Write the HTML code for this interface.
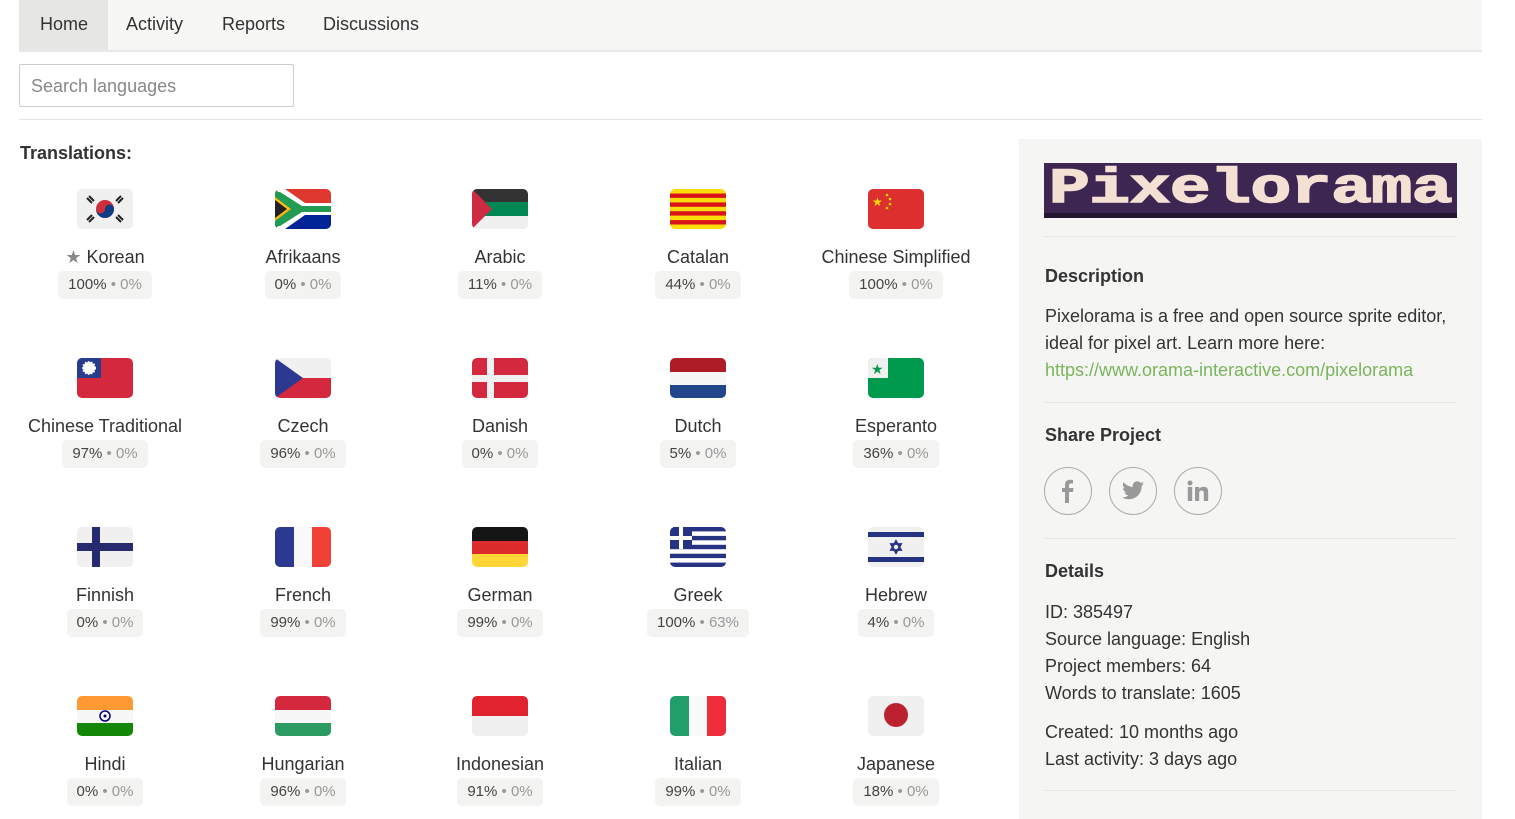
<!DOCTYPE html>
<html><head><meta charset="utf-8"><style>
*{box-sizing:border-box;margin:0;padding:0}
body{width:1515px;height:811px;overflow:hidden;background:#fff;font-family:"Liberation Sans",sans-serif;color:#333;position:relative}
.nav{position:absolute;left:19px;top:0;width:1463px;height:52px;background:#f7f7f6;border-bottom:2px solid #e8e8e6}
.nav span{position:absolute;top:14px;font-size:18px;color:#333}
.home{position:absolute;left:0;top:0;width:89px;height:50px;background:#e6e6e4}
.search{position:absolute;left:19px;top:64px;width:275px;height:43px;border:1px solid #ccc;border-radius:2px;font-size:18px;color:#888;padding:11px 11px}
.hr{position:absolute;left:19px;top:119px;width:1463px;height:1px;background:#e4e4e2}
.tt{position:absolute;left:20px;top:143px;font-size:18px;font-weight:bold;color:#333}
.cell{position:absolute;width:198px;text-align:center}
.flag{width:56px;height:40px;margin:0 auto;border-radius:5px;overflow:hidden}
.flag svg{display:block}
.nm{margin-top:17px;font-size:18px;line-height:22px;color:#333;white-space:nowrap}
.bd{display:inline-block;margin-top:3px;background:#f3f3f1;border-radius:5px;padding:0 10px;height:28px;line-height:28px;font-size:15px;color:#444}
.bd i{font-style:normal;color:#999}
.side{position:absolute;left:1019px;top:139px;width:463px;height:680px;background:#f5f5f3}
.side .ln{position:absolute;left:25px;width:413px;height:1px;background:#e6e6e1}
.side h3{position:absolute;left:26px;font-size:18px;font-weight:bold;color:#333}
.side p{position:absolute;left:26px;font-size:18px;line-height:27px;color:#333}
.circ{position:absolute;top:328px;width:48px;height:48px;border:1.5px solid #aaa;border-radius:50%}
.circ svg{position:absolute;left:11px;top:11px}
</style></head><body>
<div class="nav"><div class="home"></div>
<span style="left:21px">Home</span><span style="left:107px">Activity</span><span style="left:203px">Reports</span><span style="left:304px">Discussions</span></div>
<div class="search">Search languages</div>
<div class="hr"></div>
<div class="tt">Translations:</div>

<!-- row 1 -->
<div class="cell" style="left:6px;top:189px"><div class="flag"><svg width="56" height="40"><rect width="56" height="40" fill="#f0f0f0"/><circle cx="28" cy="20" r="9" fill="#cd2e3a"/><path d="M19 20a9 9 0 0 0 18 0a4.5 4.5 0 0 0-9 0a4.5 4.5 0 0 1-9 0z" fill="#0f3b84"/><g stroke="#222" stroke-width="2"><path d="M10 9l5 5M12 7l5 5M39 12l5-5M41 14l5-5M10 31l5-5M12 33l5-5M39 28l5 5M41 26l5 5"/></g></svg></div><div class="nm"><span style="color:#888">★</span> Korean</div><div class="bd">100% <i>• 0%</i></div></div>
<div class="cell" style="left:204px;top:189px"><div class="flag"><svg width="56" height="40"><rect width="56" height="20" fill="#de3831"/><rect y="20" width="56" height="20" fill="#002395"/><path d="M0 0L22 20L0 40z" fill="#229b54"/><path d="M0 0h10l20 14h26v12H30L10 40H0L22 20z" fill="#fff"/><path d="M0 3h5l22 14h29v6H27L5 37H0z" fill="#229b54"/><path d="M0 8L16 20L0 32z" fill="#ffb612"/><path d="M0 11L12 20L0 29z" fill="#222"/></svg></div><div class="nm">Afrikaans</div><div class="bd">0% <i>• 0%</i></div></div>
<div class="cell" style="left:401px;top:189px"><div class="flag"><svg width="56" height="40"><rect width="56" height="13" fill="#333"/><rect y="13" width="56" height="14" fill="#008753"/><rect y="27" width="56" height="13" fill="#f0f0f0"/><path d="M0 0L20 20L0 40z" fill="#ce2b43"/></svg></div><div class="nm">Arabic</div><div class="bd">11% <i>• 0%</i></div></div>
<div class="cell" style="left:599px;top:189px"><div class="flag"><svg width="56" height="40"><rect width="56" height="40" fill="#fcdd09"/><g fill="#da121a"><rect y="4.5" width="56" height="4.4"/><rect y="13.4" width="56" height="4.4"/><rect y="22.2" width="56" height="4.4"/><rect y="31.1" width="56" height="4.4"/></g></svg></div><div class="nm">Catalan</div><div class="bd">44% <i>• 0%</i></div></div>
<div class="cell" style="left:797px;top:189px"><div class="flag"><svg width="56" height="40"><rect width="56" height="40" fill="#de2f2f"/><text x="4" y="17" font-size="12" fill="#ffde00">★</text><g fill="#ffde00"><circle cx="19" cy="6" r="1.3"/><circle cx="22" cy="10" r="1.3"/><circle cx="22" cy="15" r="1.3"/><circle cx="19" cy="19" r="1.3"/></g></svg></div><div class="nm">Chinese Simplified</div><div class="bd">100% <i>• 0%</i></div></div>

<!-- row 2 -->
<div class="cell" style="left:6px;top:358px"><div class="flag"><svg width="56" height="40"><rect width="56" height="40" fill="#d3283e"/><rect width="24" height="20" fill="#263d8f"/><circle cx="12" cy="10" r="6" fill="#fff" stroke="#fff" stroke-dasharray="1.5 1.5" stroke-width="2"/></svg></div><div class="nm">Chinese Traditional</div><div class="bd">97% <i>• 0%</i></div></div>
<div class="cell" style="left:204px;top:358px"><div class="flag"><svg width="56" height="40"><rect width="56" height="20" fill="#f0f0f0"/><rect y="20" width="56" height="20" fill="#d3283e"/><path d="M0 0L28 20L0 40z" fill="#2b3990"/></svg></div><div class="nm">Czech</div><div class="bd">96% <i>• 0%</i></div></div>
<div class="cell" style="left:401px;top:358px"><div class="flag"><svg width="56" height="40"><rect width="56" height="40" fill="#d3283e"/><rect x="15" width="7" height="40" fill="#f0f0f0"/><rect y="17" width="56" height="7" fill="#f0f0f0"/></svg></div><div class="nm">Danish</div><div class="bd">0% <i>• 0%</i></div></div>
<div class="cell" style="left:599px;top:358px"><div class="flag"><svg width="56" height="40"><rect width="56" height="14" fill="#ae1c28"/><rect y="14" width="56" height="13" fill="#f7f7f7"/><rect y="27" width="56" height="13" fill="#21468b"/></svg></div><div class="nm">Dutch</div><div class="bd">5% <i>• 0%</i></div></div>
<div class="cell" style="left:797px;top:358px"><div class="flag"><svg width="56" height="40"><rect width="56" height="40" fill="#009a4e"/><rect width="20" height="20" fill="#f0f0f0"/><text x="3" y="16" font-size="14" fill="#009a4e">★</text></svg></div><div class="nm">Esperanto</div><div class="bd">36% <i>• 0%</i></div></div>

<!-- row 3 -->
<div class="cell" style="left:6px;top:527px"><div class="flag"><svg width="56" height="40"><rect width="56" height="40" fill="#f0f0f0"/><rect x="15" width="8" height="40" fill="#282a6f"/><rect y="16" width="56" height="8" fill="#282a6f"/></svg></div><div class="nm">Finnish</div><div class="bd">0% <i>• 0%</i></div></div>
<div class="cell" style="left:204px;top:527px"><div class="flag"><svg width="56" height="40"><rect width="19" height="40" fill="#2b3990"/><rect x="19" width="18" height="40" fill="#f9f9f9"/><rect x="37" width="19" height="40" fill="#ef4135"/></svg></div><div class="nm">French</div><div class="bd">99% <i>• 0%</i></div></div>
<div class="cell" style="left:401px;top:527px"><div class="flag"><svg width="56" height="40"><rect width="56" height="14" fill="#151515"/><rect y="14" width="56" height="13" fill="#dd2c2c"/><rect y="27" width="56" height="13" fill="#ffd635"/></svg></div><div class="nm">German</div><div class="bd">99% <i>• 0%</i></div></div>
<div class="cell" style="left:599px;top:527px"><div class="flag"><svg width="56" height="40"><rect width="56" height="40" fill="#fff"/><g fill="#263282"><rect y="0" width="56" height="4.4"/><rect y="8.9" width="56" height="4.4"/><rect y="17.8" width="56" height="4.4"/><rect y="26.7" width="56" height="4.4"/><rect y="35.6" width="56" height="4.4"/><rect width="22" height="22"/></g><rect x="9" width="4" height="22" fill="#fff"/><rect y="9" width="22" height="4" fill="#fff"/></svg></div><div class="nm">Greek</div><div class="bd">100% <i>• 63%</i></div></div>
<div class="cell" style="left:797px;top:527px"><div class="flag"><svg width="56" height="40"><rect width="56" height="40" fill="#f0f0f0"/><rect y="5" width="56" height="5" fill="#263282"/><rect y="30" width="56" height="5" fill="#263282"/><path d="M28 14l5 9h-10zM28 26l5-9h-10z" fill="none" stroke="#263282" stroke-width="1.8"/></svg></div><div class="nm">Hebrew</div><div class="bd">4% <i>• 0%</i></div></div>

<!-- row 4 -->
<div class="cell" style="left:6px;top:696px"><div class="flag"><svg width="56" height="40"><rect width="56" height="14" fill="#ff9933"/><rect y="14" width="56" height="13" fill="#f7f7f7"/><rect y="27" width="56" height="13" fill="#138808"/><circle cx="28" cy="20" r="5" fill="none" stroke="#000080" stroke-width="1.5"/><circle cx="28" cy="20" r="1.5" fill="#000080"/></svg></div><div class="nm">Hindi</div><div class="bd">0% <i>• 0%</i></div></div>
<div class="cell" style="left:204px;top:696px"><div class="flag"><svg width="56" height="40"><rect width="56" height="14" fill="#d3283e"/><rect y="14" width="56" height="13" fill="#f7f7f7"/><rect y="27" width="56" height="13" fill="#2c9a63"/></svg></div><div class="nm">Hungarian</div><div class="bd">96% <i>• 0%</i></div></div>
<div class="cell" style="left:401px;top:696px"><div class="flag"><svg width="56" height="40"><rect width="56" height="20" fill="#e0232f"/><rect y="20" width="56" height="20" fill="#f0f0f0"/></svg></div><div class="nm">Indonesian</div><div class="bd">91% <i>• 0%</i></div></div>
<div class="cell" style="left:599px;top:696px"><div class="flag"><svg width="56" height="40"><rect width="19" height="40" fill="#229e6b"/><rect x="19" width="18" height="40" fill="#f9f9f9"/><rect x="37" width="19" height="40" fill="#ee2d3a"/></svg></div><div class="nm">Italian</div><div class="bd">99% <i>• 0%</i></div></div>
<div class="cell" style="left:797px;top:696px"><div class="flag"><svg width="56" height="40"><rect width="56" height="40" fill="#f0f0f0"/><circle cx="28" cy="19" r="12" fill="#bc2130"/></svg></div><div class="nm">Japanese</div><div class="bd">18% <i>• 0%</i></div></div>

<div class="side">
<div style="position:absolute;left:25px;top:24px;width:413px;height:55px;background:#3d2651;border-bottom:5px solid #231630"></div>
<div style="position:absolute;left:25px;top:26px;width:413px;height:50px;text-align:center;font-family:'Liberation Mono',monospace;font-weight:bold;font-size:68px;line-height:50px;color:#f5e1d4;letter-spacing:-0.5px;transform:scaleY(0.72);-webkit-text-stroke:2px #f5e1d4">Pixelorama</div>
<div class="ln" style="top:97px"></div>
<h3 style="top:127px">Description</h3>
<p style="top:164px">Pixelorama is a free and open source sprite editor,<br>ideal for pixel art. Learn more here:<br><span style="color:#7ab55c">https://www.orama-interactive.com/pixelorama</span></p>
<div class="ln" style="top:263px"></div>
<h3 style="top:286px">Share Project</h3>
<div class="circ" style="left:25px"><svg width="24" height="24" viewBox="0 0 24 24"><path d="M13 24V13h4l.5-4H13V6.5c0-1.2.4-2 2-2h2V1c-.5 0-1.6-.2-3-.2-3 0-5 1.8-5 5V9H6v4h3v11z" fill="#999"/></svg></div>
<div class="circ" style="left:90px"><svg width="24" height="24" viewBox="0 0 24 24"><path d="M23 4.5c-.8.4-1.7.6-2.6.7.9-.6 1.6-1.4 2-2.5-.9.5-1.9.9-2.9 1.1A4.5 4.5 0 0 0 11.8 8 12.8 12.8 0 0 1 2.5 3.3a4.5 4.5 0 0 0 1.4 6c-.7 0-1.4-.2-2-.6 0 2.2 1.600 4 3.6 4.4-.7.2-1.4.2-2 .1.6 1.8 2.2 3.1 4.2 3.1A9 9 0 0 1 1 18.2 12.8 12.8 0 0 0 7.9 20.2c8.3 0 12.8-6.9 12.8-12.8v-.6c.9-.6 1.7-1.4 2.3-2.3z" fill="#999"/></svg></div>
<div class="circ" style="left:155px"><svg width="24" height="24" viewBox="0 0 24 24"><circle cx="4" cy="4" r="2.5" fill="#999"/><rect x="1.8" y="8" width="4.4" height="14" fill="#999"/><path d="M9 8h4.2v2c.7-1.3 2.3-2.3 4.4-2.3 4 0 4.600 2.6 4.6 6V22h-4.4v-7c0-1.700 0-3.5-2.2-3.5s-2.4 1.6-2.4 3.4V22H9z" fill="#999"/></svg></div>
<div class="ln" style="top:399px"></div>
<h3 style="top:422px">Details</h3>
<p style="top:460px">ID: 385497<br>Source language: English<br>Project members: 64<br>Words to translate: 1605</p>
<p style="top:580px">Created: 10 months ago<br>Last activity: 3 days ago</p>
<div class="ln" style="top:651px"></div>
</div>
</body></html>
